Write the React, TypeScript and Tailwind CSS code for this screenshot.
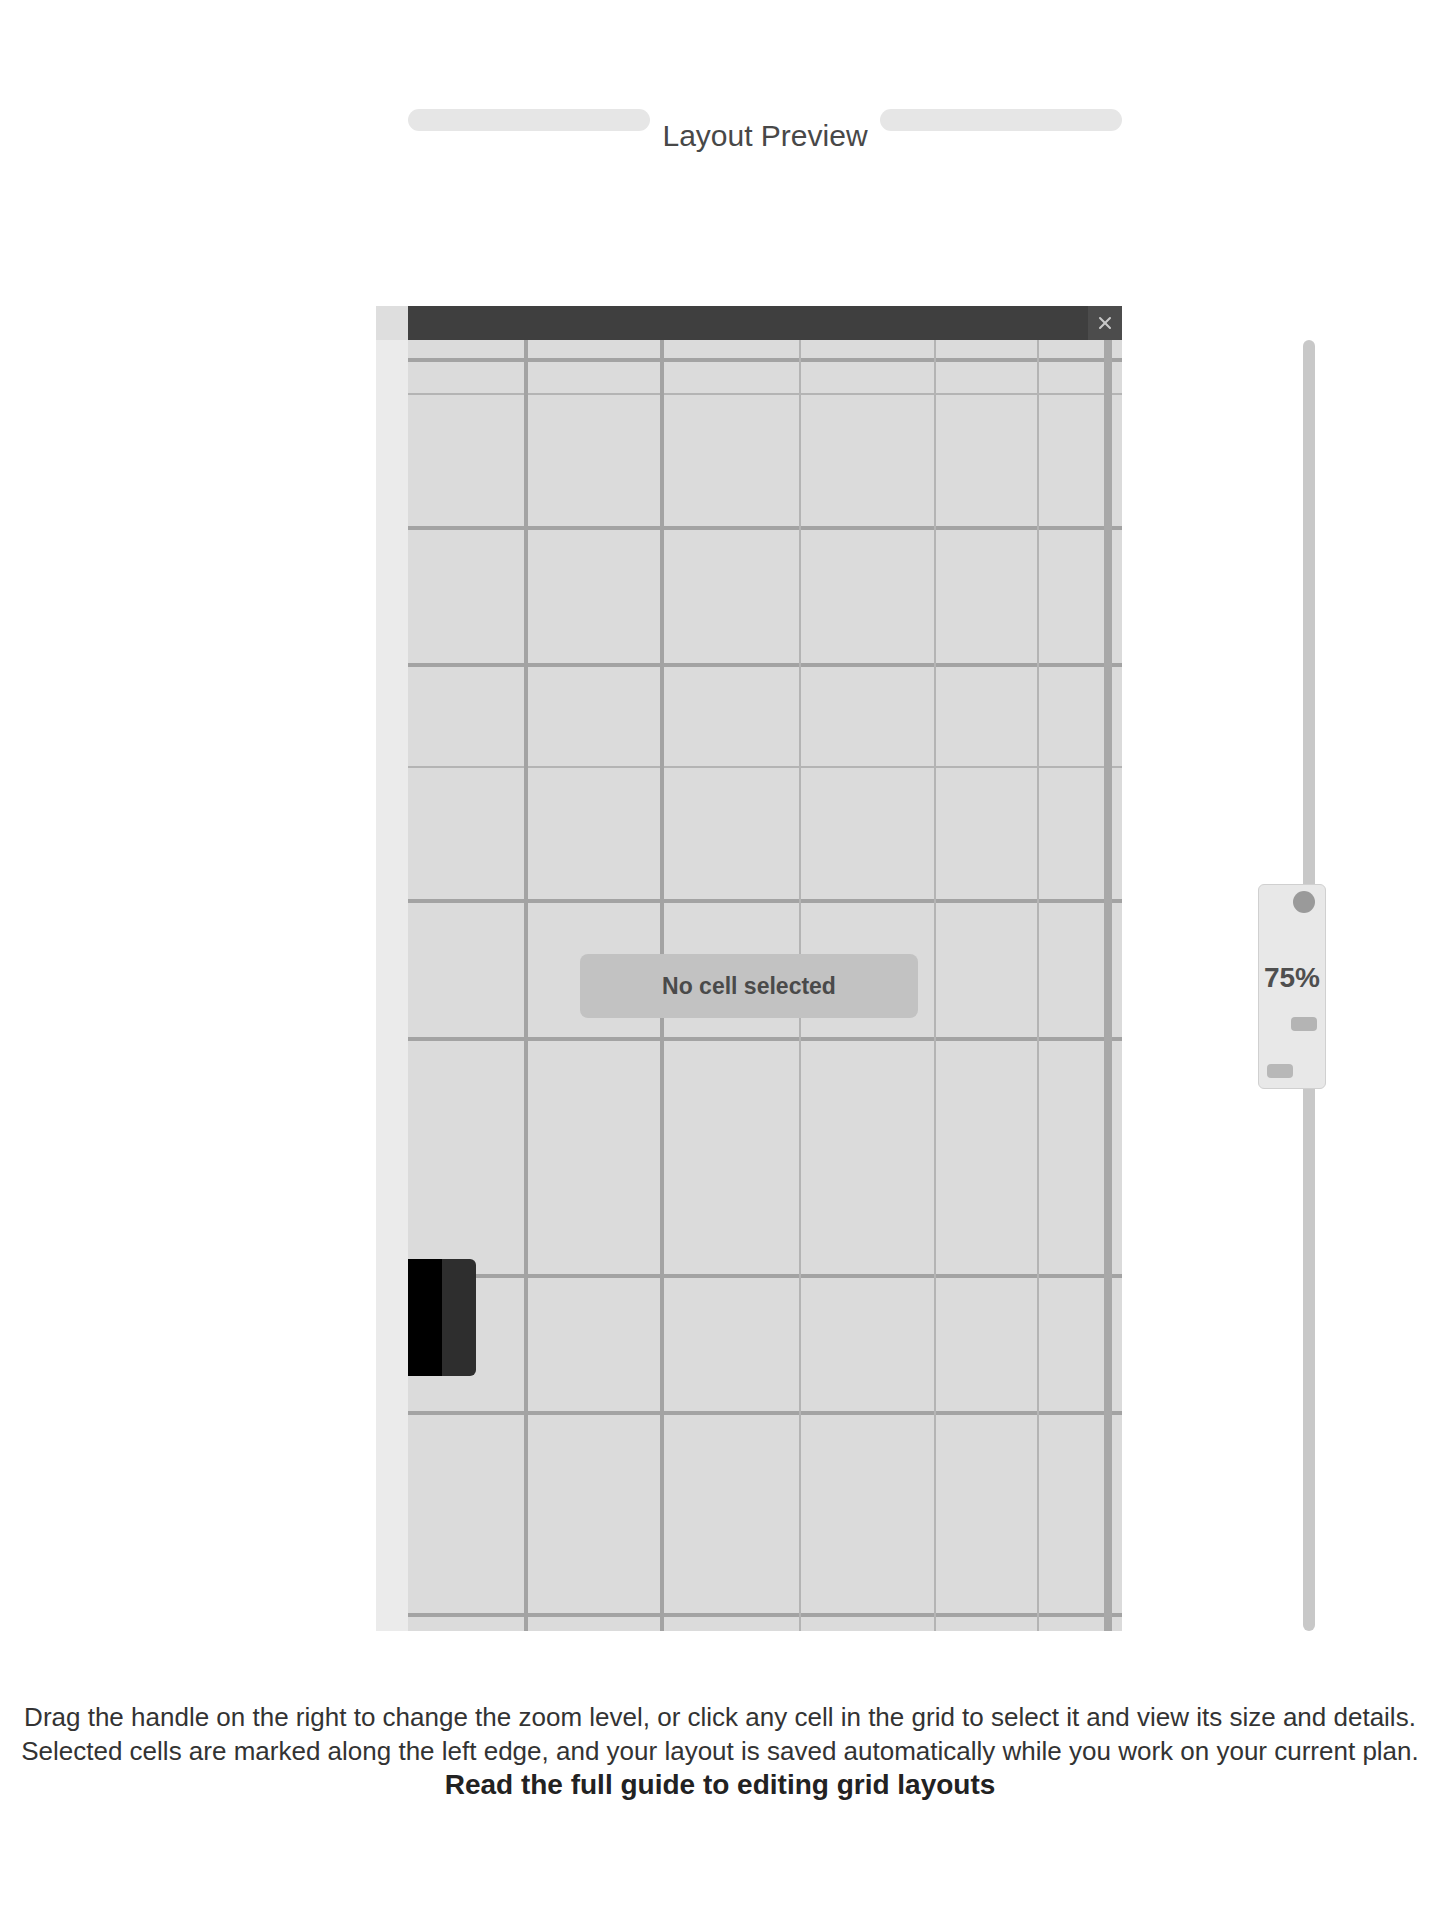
import React from "react";
import { X } from "lucide-react";

// Grid strokes of the plan canvas (coordinates in canvas pixels).
const H_LINES = [
  { y: 20, w: 4, c: "#a3a3a3" },
  { y: 54, w: 2, c: "#b4b4b4" },
  { y: 188, w: 4, c: "#a3a3a3" },
  { y: 325, w: 4, c: "#a3a3a3" },
  { y: 427, w: 2, c: "#b4b4b4" },
  { y: 561, w: 4, c: "#a3a3a3" },
  { y: 699, w: 4, c: "#a3a3a3" },
  { y: 936, w: 4, c: "#a3a3a3" },
  { y: 1073, w: 4, c: "#a3a3a3" },
  { y: 1275, w: 4, c: "#a3a3a3" },
];

const V_LINES = [
  { x: 118, w: 4, c: "#a3a3a3" },
  { x: 254, w: 4, c: "#a3a3a3" },
  { x: 392, w: 2, c: "#b4b4b4" },
  { x: 527, w: 2, c: "#b4b4b4" },
  { x: 630, w: 2, c: "#b4b4b4" },
];

const CANVAS_W = 714;
const CANVAS_H = 1291;

function PlanGrid() {
  return (
    <svg
      width={CANVAS_W}
      height={CANVAS_H}
      viewBox={`0 0 ${CANVAS_W} ${CANVAS_H}`}
      className="block"
    >
      {H_LINES.map((l) => (
        <rect key={`h${l.y}`} x={0} y={l.y - l.w / 2} width={CANVAS_W} height={l.w} fill={l.c} />
      ))}
      {V_LINES.map((l) => (
        <rect key={`v${l.x}`} x={l.x - l.w / 2} y={0} width={l.w} height={CANVAS_H} fill={l.c} />
      ))}
      <rect x={696} y={0} width={8} height={CANVAS_H} fill="#a8a8a8" />
    </svg>
  );
}

function ZoomSlider() {
  return (
    <div className="flex h-[1291px] w-[68px] flex-col">
      <div className="ml-[45px] h-[544px] w-[12px] rounded-t-full bg-[#c8c8c8]" />
      <div className="flex h-[205px] w-[68px] flex-col rounded-md border border-[#d0d0d0] bg-[#e8e8e8]">
        <div className="mr-[10px] mt-[6px] h-[22px] w-[22px] self-end rounded-full bg-[#9a9a9a]" />
        <div className="mt-[40px] text-center text-[28px] font-bold leading-[50px] text-[#4f4f4f]">
          75%
        </div>
        <div className="mr-[8px] mt-[14px] h-[14px] w-[26px] self-end rounded-sm bg-[#b4b4b4]" />
        <div className="mb-[10px] ml-[8px] mt-auto h-[14px] w-[26px] rounded-sm bg-[#b8b8b8]" />
      </div>
      <div className="ml-[45px] w-[12px] flex-1 rounded-b-full bg-[#c8c8c8]" />
    </div>
  );
}

export default function App() {
  return (
    <div className="min-h-[1920px] bg-white font-['Liberation_Sans',Arial,sans-serif]">
      {/* heading with side rules */}
      <div className="pl-[408px] pt-[103px]">
        <div className="flex h-[66px] w-[714px] items-start gap-[12px]">
          <div className="mt-[6px] h-[22px] flex-1 rounded-full bg-[#e6e6e6]" />
          <h1 className="text-[30px] font-medium leading-[66px] text-[#484848]">Layout Preview</h1>
          <div className="mt-[6px] h-[22px] flex-1 rounded-full bg-[#e6e6e6]" />
        </div>
      </div>

      {/* plan window + zoom control */}
      <div className="mt-[137px] flex pl-[376px]">
        <div className="flex h-[1325px] w-[32px] flex-col">
          <div className="h-[34px] bg-[#dedede]" />
          <div className="flex-1 bg-[#ebebeb]" />
        </div>
        <div className="w-[714px]">
          <div className="flex h-[34px] items-center justify-end bg-[#3f3f3f]">
            <div className="flex h-[34px] w-[34px] items-center justify-center bg-[#4c4c4c]">
              <X size={20} strokeWidth={2.5} color="#c8c8c8" />
            </div>
          </div>
          <div className="relative h-[1291px] w-[714px] bg-[#dbdbdb]">
            <PlanGrid />
            <div className="absolute left-[172px] top-[614px] flex h-[64px] w-[338px] items-center justify-center rounded-lg bg-[#c2c2c2] text-[23px] font-semibold text-[#4a4a4a]">
              No cell selected
            </div>
            <div className="absolute left-0 top-[919px] flex h-[117px] w-[68px] overflow-hidden rounded-r-md">
              <div className="w-[34px] bg-black" />
              <div className="w-[34px] bg-[#2e2e2e]" />
            </div>
          </div>
        </div>
        <div className="ml-[136px] pt-[34px]">
          <ZoomSlider />
        </div>
      </div>

      {/* caption */}
      <div className="mx-auto mt-[69px] w-[1400px] text-center text-[26px] leading-[34px] text-[#333]">
        <p className="whitespace-nowrap">
          Drag the handle on the right to change the zoom level, or click any cell in the grid to select it and view its size and details.
        </p>
        <p className="whitespace-nowrap">
          Selected cells are marked along the left edge, and your layout is saved automatically while you work on your current plan.
        </p>
        <p className="text-[28px] font-bold text-[#222]">Read the full guide to editing grid layouts</p>
      </div>
    </div>
  );
}
